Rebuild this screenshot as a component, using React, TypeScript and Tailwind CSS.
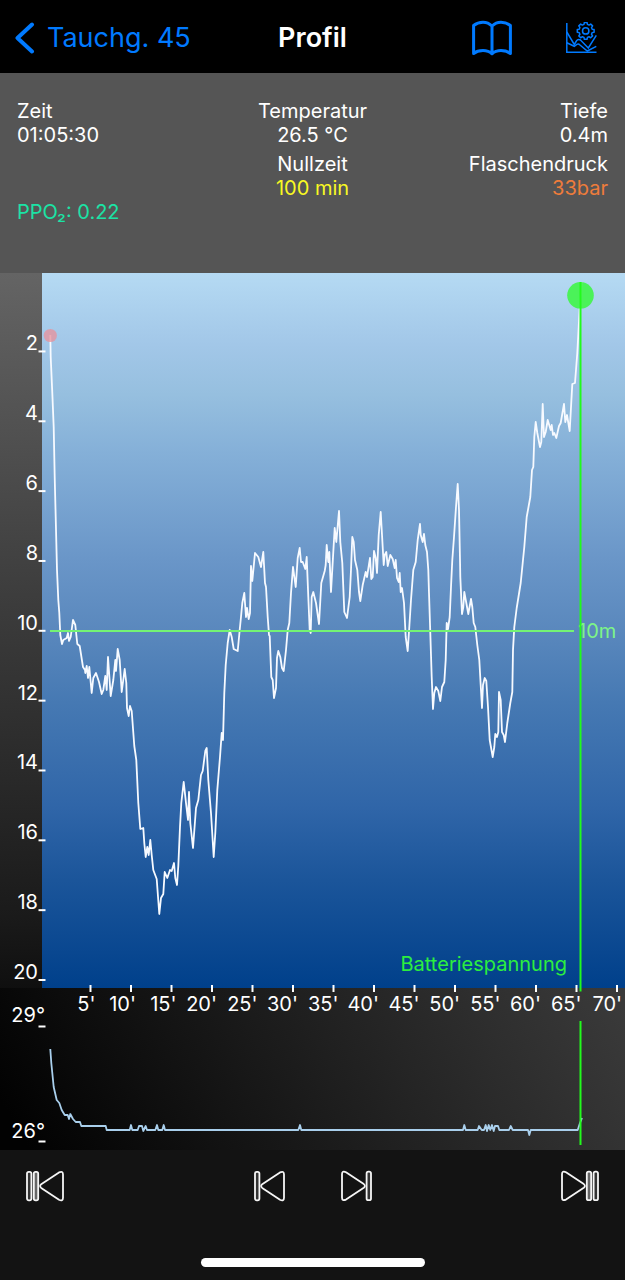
const depthTicks = [2, 4, 6, 8, 10, 12, 14, 16, 18, 20];
const timeTicks = [5, 10, 15, 20, 25, 30, 35, 40, 45, 50, 55, 60, 65, 70];

const depthLine =
  '50.3,335 50.7,357 52.3,393 53.7,427 54.7,477 55.7,517 57,570 58.3,600 59.3,613 60.3,635 62,644 63.3,640 66.7,638 68,633 69,641 70.7,637 73,620 75.3,625 77.3,644 79.7,646 83,667 85,670 85.3,673 86.7,666 88,678 89.3,667 91.7,693 93.3,678 96,673 99,682 101.7,694 103.3,690 105.3,676 106.7,690 108,657 110.7,696 113.3,680 115.3,660 116,671 117.7,649 119.7,660 121.7,692 124.7,669 126.3,683 127,708 128.7,716 130,706 131.7,711 134.3,746 136.3,760 138.3,803 140.3,829 143.3,828 144.3,843 145.7,857 147.3,847 148.7,855 150.3,840 151.7,855 153.3,870 156.7,879 159.3,914 161,898 163.3,894 164.7,872 167.3,878 170,870 171.7,871 174,863 175.3,878 177,885 178.3,866 180,827 181.3,803 183.7,782 186,803 188,820 189,792 190.3,823 193,848 196,808 198.3,800 201,775 202.7,771 205.3,751 206.7,748 208.3,780 211,813 213.7,857 215.3,833 217.3,790 220,757 221.7,733 223,740 224.3,693 225.7,665 227.7,643 229.7,630 231.7,637 233.7,649 237.7,651 239.7,630 241,617 242.3,603 244.3,593 246,617 247,608 248.7,619 250,613 251,566 252.3,581 255,553 258.3,557 261,567 263.3,552 265,583 266,587 267.7,617 269,635 269.7,636 271.3,677 272.7,680 274,698 276,688 277,658 278.3,651 280.3,657 282,668 283.7,671 286,650 287.7,630 289.3,623 291,593 293,567 295.7,587 297.7,558 299.7,548 301,562 302.7,562 305.3,569 306.7,557 308.3,597 309.7,630 310.7,633 311.7,597 313.3,592 316,603 319,624 321.3,583 324.7,571 325.7,565 326.7,545 328.3,562 329.3,552 331,592 333.3,552 334.7,528 336.3,542 339,511 340.3,542 342.3,563 344.3,612 347,618 349.7,597 351,570 352.3,537 353.7,542 355,560 357.3,570 359,592 360.3,601 362.7,585 365.7,572 367,577 370,558 371.3,579 372.7,577 374,551 375.7,558 377,573 378.7,535 380.7,512 382.3,540 383.7,565 384.7,555 386.3,552 387.7,566 390.3,555 392.7,559 394.7,568 395.7,560 397,578 398.7,582 399.7,573 400.7,592 402,588 404,603 405.7,637 407.7,651 409.3,627 411,600 413.3,570 415.7,562 417.7,540 420,524 420.7,535 422.7,542 424,534 425.3,545 427,552 428.3,570 429,593 430.3,633 431.7,677 433,709 434.3,693 436,687 438.3,691 440.3,701 442,687 444.3,682 445.7,660 446.7,623 448,629 449.7,617 451,587 452.3,560 454,537 456,507 457.7,484 459,510 460,560 460.3,577 462,614 463.3,607 464.3,592 468.3,614 471,599 472.3,607 473.7,623 475.3,627 477.3,645 479.3,660 480.7,685 482,708 483,685 484.7,678 486.3,681 488,707 489.7,740 492.7,757 494.3,747 495.3,734 497,737 498.3,732 499,692 500.7,700 502,732 503.7,735 505,742 507.3,723 510.3,703 512.3,692 513,650 514.3,627 516.7,608 520.7,583 522.7,563 524.3,547 526.7,517 530.3,497 532,470 533.3,467 534.3,437 535.7,422 537.3,433 540,447 541.3,442 542.7,404 544,437 545.7,432 547.7,420 550.7,430 551.7,425 553,435 554.3,433 556.3,438 559,426 560.7,423 564,404 565.3,422 567,415 569.7,431 572.3,384 575,383 577.3,353 578.7,327 580,303 582,282';

const tempLine =
  '50.3,1049 51.3,1063 53.7,1087 56.7,1100 59.3,1103 61.7,1110 64.7,1115 67.7,1115 69,1119 70.3,1114 73,1119 75.7,1122 80,1122 81.3,1126 105.7,1126 106.7,1130 129.7,1130 131,1125 132.3,1130 137.7,1130 139,1126 142,1126 143.3,1131 145.7,1126 147,1130 155.3,1130 157,1125 158.3,1130 162.3,1130 163.7,1125 165,1130 298.3,1130 300,1125 301.3,1130 463,1130 464.3,1125 465.7,1130 477.7,1130 479,1126 481.7,1130 484,1130 485.7,1125 487,1131 488.7,1125 490.3,1130 492,1125 493.7,1131 495,1126 498,1126 499.3,1130 509,1130 510.7,1126 512.7,1130 528,1130 529.3,1135 530.7,1130 577.7,1130 580,1123 582,1118';

function gearPoints(cx: number, cy: number, outer: number, inner: number) {
  const points: string[] = [];
  for (let i = 0; i < 8; i++) {
    const steps: [number, number][] = [[-15, inner], [-9, outer], [9, outer], [15, inner]];
    steps.forEach(([offset, radius]) => {
      const a = ((i * 45 + offset) * Math.PI) / 180;
      points.push(`${(cx + radius * Math.sin(a)).toFixed(2)},${(cy - radius * Math.cos(a)).toFixed(2)}`);
    });
  }
  return points.join(' ');
}

function Header() {
  return (
    <header className="grid grid-cols-[1fr_auto_1fr] items-center h-[73px] pt-[2px] px-[14px] bg-black text-[27px] leading-8">
      <button className="flex items-center gap-3 text-[#007aff]">
        <svg className="w-[21px] h-8" viewBox="0 0 21 32" fill="none" stroke="currentColor" strokeWidth="4" strokeLinecap="round" strokeLinejoin="round">
          <path d="M18 2.5 3.5 16 18 29.5" />
        </svg>
        Tauchg. 45
      </button>
      <h1 className="font-semibold text-white">Profil</h1>
      <div className="flex items-center justify-end gap-[54px] pr-[14px] text-[#007aff]">
        <button aria-label="Logbuch">
          <svg className="w-10 h-9" viewBox="0 0 40 36" fill="none" stroke="currentColor" strokeWidth="3" strokeLinejoin="round">
            <path d="M20 6C17 3 14 2.2 11 2.2C7.5 2.2 4 3.5 1.6 5.5V33.5C4 31.5 7.5 30.6 11 30.6C14 30.6 17.5 31.5 20 33.8C22.5 31.5 26 30.6 29 30.6C32.5 30.6 36 31.5 38.4 33.5V5.5C36 3.5 32.5 2.2 29 2.2C26 2.2 23 3 20 6ZM20 6V33.5" />
          </svg>
        </button>
        <button aria-label="Diagramm">
          <svg className="w-[31px] h-8" viewBox="0 0 31 32" fill="none" stroke="currentColor" strokeWidth="1.5">
            <path d="M.8 1V30.3H30.5" />
            <path d="M.8 10 8.3 22.5 10.7 18.5Q12.5 17 14.5 18L22.3 26 30.3 13.3" />
            <path d="M.8 20.7 8.3 24.3 10.8 22.4Q12.5 21.5 14 23L21.3 29 30.3 24.3" />
            <polygon points={gearPoints(19.7, 8.9, 8.5, 6.7)} strokeLinejoin="round" />
            <circle cx="19.7" cy="8.9" r="3.2" />
          </svg>
        </button>
      </div>
    </header>
  );
}

interface ReadingProps {
  label: string;
  value: string;
  className?: string;
}

function Reading({ label, value, className = '' }: ReadingProps) {
  return (
    <div>
      <div>{label}</div>
      <div className={className}>{value}</div>
    </div>
  );
}

function Readings() {
  return (
    <section className="px-[17px] pt-[26px] pb-[49px] bg-[#555555] text-white text-[20px] leading-6">
      <div className="grid grid-cols-3 gap-y-[5px]">
        <Reading label="Zeit" value="01:05:30" />
        <div className="text-center">
          <Reading label="Temperatur" value="26.5 °C" />
        </div>
        <div className="text-right">
          <Reading label="Tiefe" value="0.4m" />
        </div>
        <div className="col-start-2 text-center">
          <Reading label="Nullzeit" value="100 min" className="text-[#f8f823]" />
        </div>
        <div className="text-right">
          <Reading label="Flaschendruck" value="33bar" className="text-[#ee7c3b]" />
        </div>
      </div>
      <p className="text-[#1be3a5]">PPO₂: 0.22</p>
    </section>
  );
}

function DiveChart() {
  return (
    <svg className="block w-full" viewBox="0 273 625 877" fontSize="20" fill="white">
      <defs>
        <linearGradient id="water" x1="0" y1="0" x2="0" y2="1">
          <stop offset="0" stopColor="#b5daf3" />
          <stop offset="0.1" stopColor="#a2c7e8" />
          <stop offset="0.17" stopColor="#96bfdf" />
          <stop offset="0.25" stopColor="#85b0d8" />
          <stop offset="0.4" stopColor="#6a96c8" />
          <stop offset="0.5" stopColor="#5a88bd" />
          <stop offset="0.6" stopColor="#4679b3" />
          <stop offset="0.75" stopColor="#2f65a8" />
          <stop offset="0.85" stopColor="#1b559a" />
          <stop offset="1" stopColor="#00408b" />
        </linearGradient>
        <linearGradient id="scale" x1="0" y1="0" x2="0" y2="1">
          <stop offset="0" stopColor="#646464" />
          <stop offset="0.45" stopColor="#3d3d3d" />
          <stop offset="0.9" stopColor="#1a1a1a" />
          <stop offset="1" stopColor="#0f0f0f" />
        </linearGradient>
        <linearGradient id="panel" gradientUnits="userSpaceOnUse" x1="60" y1="1200" x2="560" y2="900">
          <stop offset="0" stopColor="#020202" />
          <stop offset="1" stopColor="#3a3a3a" />
        </linearGradient>
      </defs>

      <rect x="0" y="273" width="42" height="716" fill="url(#scale)" />
      <rect x="0" y="988" width="625" height="162" fill="url(#panel)" />
      <rect x="42" y="273" width="583" height="715" fill="url(#water)" />

      {depthTicks.map((depth) => {
        const y = 281.6 + depth * 34.92;
        return (
          <g key={depth}>
            <text x="38" y={y - 1} textAnchor="end">{depth}</text>
            <path d={`M38.5 ${y}h7`} stroke="white" strokeWidth="2" />
          </g>
        );
      })}
      {timeTicks.map((minute) => {
        const x = 50 + minute * 8.1;
        return (
          <g key={minute}>
            <text x={x + 5} y="1011" textAnchor="end">{minute}'</text>
            <path d={`M${x} 985v7`} stroke="white" strokeWidth="2" />
          </g>
        );
      })}
      <text x="45" y="1022" textAnchor="end">29°</text>
      <text x="45" y="1138" textAnchor="end">26°</text>
      <path d="M38.5 1026.5h7M38.5 1141.5h7" stroke="white" strokeWidth="2" />

      <polyline points={depthLine} fill="none" stroke="#f7faff" strokeWidth="1.8" strokeLinejoin="round" />
      <circle cx="50.3" cy="335.5" r="6.6" fill="#e9909a" fillOpacity="0.75" />
      <path d="M50 631H574" stroke="#74f374" strokeWidth="1.8" />
      <text x="578" y="638" fill="#7ef587">10m</text>
      <text x="567" y="971" textAnchor="end" fill="#2cee3f">Batteriespannung</text>

      <polyline points={tempLine} fill="none" stroke="#a9cfec" strokeWidth="1.8" strokeLinejoin="round" />
      <circle cx="580.5" cy="295.3" r="13.3" fill="#42f44c" fillOpacity="0.92" />
      <path d="M580.5 282V991.5M580.5 1021V1145" stroke="#22fa1c" strokeWidth="2" />
    </svg>
  );
}

function SkipIcon({ bars }: { bars: number }) {
  const shift = (bars - 1) * 7;
  return (
    <svg
      className={bars === 2 ? 'w-[38px] h-8' : 'w-[31px] h-8'}
      viewBox={bars === 2 ? '0 0 38 32' : '0 0 31 32'}
      fill="none"
      stroke="#f5f5f5"
      strokeWidth="1.8"
      strokeLinejoin="round"
    >
      <rect x="1" y="1.8" width="4.4" height="28.6" rx="1.8" fill="#333333" />
      {bars === 2 && <rect x="7.8" y="1.8" width="4.4" height="28.6" rx="1.8" fill="#666666" />}
      <path
        transform={`translate(${shift} 0)`}
        d="M8.2 14.3 26 2.4Q30 .6 30 4.5V27.7Q30 31.6 26 29.8L8.2 17.9Q6 16.1 8.2 14.3Z"
      />
    </svg>
  );
}

function Controls() {
  return (
    <footer className="bg-[#131313] pt-5 pb-[13px]">
      <div className="flex items-center justify-between px-[26px]">
        <button aria-label="Zum Anfang">
          <SkipIcon bars={2} />
        </button>
        <div className="flex gap-14">
          <button aria-label="Zurück">
            <SkipIcon bars={1} />
          </button>
          <button aria-label="Weiter" className="rotate-180">
            <SkipIcon bars={1} />
          </button>
        </div>
        <button aria-label="Zum Ende" className="rotate-180">
          <SkipIcon bars={2} />
        </button>
      </div>
      <div className="mx-auto mt-14 h-[9px] w-[224px] rounded-full bg-white" />
    </footer>
  );
}

export default function App() {
  return (
    <main className="min-h-screen bg-[#131313] font-['Inter',sans-serif]">
      <Header />
      <Readings />
      <DiveChart />
      <Controls />
    </main>
  );
}
